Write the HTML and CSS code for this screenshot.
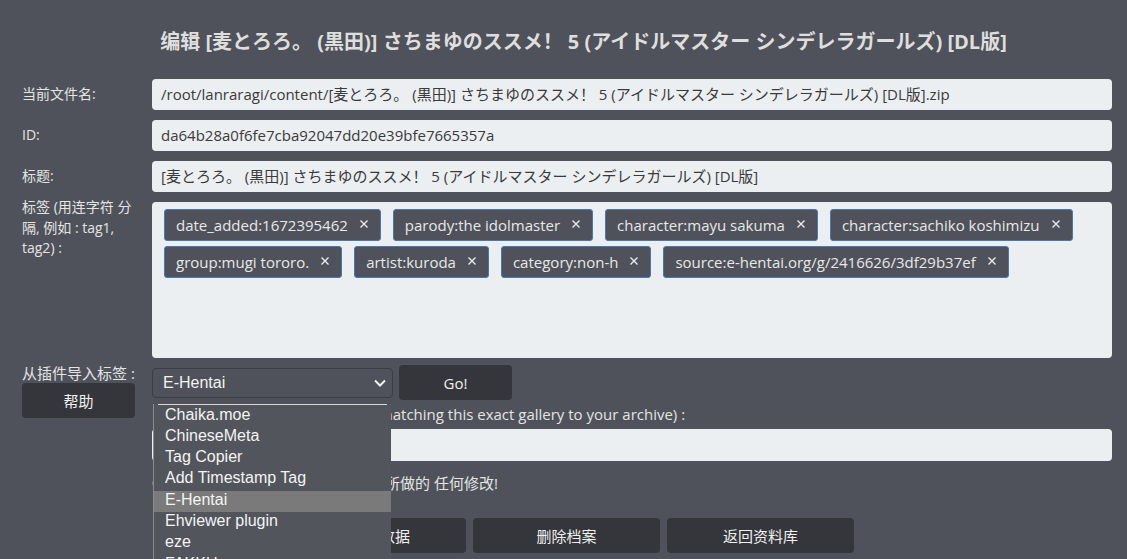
FILE: index.html
```html
<!DOCTYPE html>
<html lang="zh-CN">
<head>
<meta charset="utf-8">
<title>编辑档案</title>
<link rel="stylesheet" href="styles.css">
</head>
<body>
<main class="page">
  <h1 class="title">编辑 [麦とろろ。 (黒田)] さちまゆのススメ！ 5 (アイドルマスター シンデレラガールズ) [DL版]</h1>

  <div class="form">
    <div class="label label-mid">当前文件名:</div>
    <div class="field">/root/lanraragi/content/[麦とろろ。 (黒田)] さちまゆのススメ！ 5 (アイドルマスター シンデレラガールズ) [DL版].zip</div>

    <div class="label label-mid">ID:</div>
    <div class="field">da64b28a0f6fe7cba92047dd20e39bfe7665357a</div>

    <div class="label label-mid">标题:</div>
    <div class="field">[麦とろろ。 (黒田)] さちまゆのススメ！ 5 (アイドルマスター シンデレラガールズ) [DL版]</div>

    <div class="label label-tags">标签 (用连字符 分隔, 例如 : tag1, tag2) :</div>
    <div class="tagbox">
      <span class="tag">date_added:1672395462<svg class="tag-x" viewBox="0 0 10 10"><path d="M1.5 1.5 L8.5 8.5 M8.5 1.5 L1.5 8.5"/></svg></span>
      <span class="tag">parody:the idolmaster<svg class="tag-x" viewBox="0 0 10 10"><path d="M1.5 1.5 L8.5 8.5 M8.5 1.5 L1.5 8.5"/></svg></span>
      <span class="tag">character:mayu sakuma<svg class="tag-x" viewBox="0 0 10 10"><path d="M1.5 1.5 L8.5 8.5 M8.5 1.5 L1.5 8.5"/></svg></span>
      <span class="tag">character:sachiko koshimizu<svg class="tag-x" viewBox="0 0 10 10"><path d="M1.5 1.5 L8.5 8.5 M8.5 1.5 L1.5 8.5"/></svg></span>
      <span class="tag">group:mugi tororo.<svg class="tag-x" viewBox="0 0 10 10"><path d="M1.5 1.5 L8.5 8.5 M8.5 1.5 L1.5 8.5"/></svg></span>
      <span class="tag">artist:kuroda<svg class="tag-x" viewBox="0 0 10 10"><path d="M1.5 1.5 L8.5 8.5 M8.5 1.5 L1.5 8.5"/></svg></span>
      <span class="tag">category:non-h<svg class="tag-x" viewBox="0 0 10 10"><path d="M1.5 1.5 L8.5 8.5 M8.5 1.5 L1.5 8.5"/></svg></span>
      <span class="tag">source:e-hentai.org/g/2416626/3df29b37ef<svg class="tag-x" viewBox="0 0 10 10"><path d="M1.5 1.5 L8.5 8.5 M8.5 1.5 L1.5 8.5"/></svg></span>
    </div>

    <div class="plugin-left">
      <div class="label label-plugin">从插件导入标签 :</div>
      <button class="btn btn-help">帮助</button>
    </div>
    <div class="plugin-right">
      <div class="plugin-row">
        <div class="select-wrap">
          <div class="select">
            <span>E-Hentai</span>
            <svg class="chevron" viewBox="0 0 12 8"><path d="M1 1.5 L6 6.5 L11 1.5"/></svg>
          </div>
          <ul class="dropdown">
            <li class="option">Chaika.moe</li>
            <li class="option">ChineseMeta</li>
            <li class="option">Tag Copier</li>
            <li class="option">Add Timestamp Tag</li>
            <li class="option option-active">E-Hentai</li>
            <li class="option">Ehviewer plugin</li>
            <li class="option">eze</li>
            <li class="option">FAKKU</li>
          </ul>
        </div>
        <button class="btn btn-go">Go!</button>
      </div>
      <div class="arg-label">E-H Gallery URL (Will attach tags matching this exact gallery to your archive) :</div>
      <div class="field field-arg"></div>
      <div class="warning">
        <svg class="warn-icon" viewBox="0 0 16 16"><circle cx="8" cy="8" r="7.5"/><path d="M8 3.5 V9.5 M8 11.2 V12.6"/></svg>
        <span>使用插件将会覆盖您在此页面上所做的 任何修改!</span>
      </div>
    </div>
  </div>

  <div class="actions">
    <button class="btn btn-action">保存元数据</button>
    <button class="btn btn-action">删除档案</button>
    <button class="btn btn-action">返回资料库</button>
  </div>
</main>
</body>
</html>
```

FILE: styles.css
```css
html, body {
  margin: 0;
  padding: 0;
  overflow: hidden;
}

body {
  background: #4f525b;
  font-family: "Open Sans", "Noto Sans CJK SC", sans-serif;
  color: #e6e6e6;
}

.page {
  width: 1127px;
  height: 559px;
  position: relative;
  overflow: hidden;
}

.title {
  margin: 0;
  padding: 28px 0 0 40px;
  line-height: 28px;
  font-size: 20px;
  font-weight: 700;
  text-align: center;
  color: #dedede;
}

.form {
  display: grid;
  grid-template-columns: 118px 1fr;
  column-gap: 12px;
  row-gap: 10px;
  padding: 0 15px 0 22px;
  margin-top: 23px;
}

.label {
  font-size: 14px;
  line-height: 20px;
  color: #e4e4e4;
}

.label-mid {
  align-self: center;
  margin-top: -2px;
}

.label-tags {
  margin-top: -5px;
  line-height: 20.5px;
}

.field {
  height: 31px;
  box-sizing: border-box;
  padding: 0 9px;
  line-height: 31px;
  font-size: 15px;
  background: #eceff1;
  color: #3a3a3a;
  border-radius: 4px;
  white-space: nowrap;
  overflow: hidden;
}

.tagbox {
  height: 156px;
  box-sizing: border-box;
  padding: 7px 12px;
  background: #eceff1;
  border-radius: 4px;
  display: flex;
  flex-wrap: wrap;
  align-content: flex-start;
}

.tag {
  display: inline-flex;
  align-items: center;
  height: 32px;
  box-sizing: border-box;
  padding: 0 11px;
  margin: 0 12px 5px 0;
  gap: 11px;
  background: #4f525b;
  border: 1px solid #4878b8;
  border-radius: 3px;
  font-size: 15px;
  color: #e8e8e8;
  white-space: nowrap;
}

.tag-x {
  width: 10px;
  height: 10px;
  margin-top: -2px;
  fill: none;
  stroke: #ececec;
  stroke-width: 1.4;
}

.plugin-left,
.plugin-right {
  margin-top: -3px;
}

.label-plugin {
  margin-top: -1px;
  font-size: 15px;
  line-height: 18px;
}

.btn {
  border: none;
  background: #35363b;
  color: #f0f0f0;
  font-family: "Open Sans", "Noto Sans CJK SC", sans-serif;
  font-size: 15px;
  border-radius: 4px;
  padding: 0;
  cursor: pointer;
}

.btn-help {
  display: block;
  margin-top: 1px;
  width: 113px;
  height: 35px;
}

.plugin-row {
  display: flex;
  align-items: center;
  height: 35px;
}

.select-wrap {
  position: relative;
  width: 241px;
  height: 30px;
}

.select {
  height: 30px;
  box-sizing: border-box;
  border: 1px solid #3a3d44;
  border-radius: 4px;
  background: #4f525b;
  display: flex;
  align-items: center;
  justify-content: space-between;
  padding: 0 6px 0 10px;
  font-family: "Liberation Sans", Arial, sans-serif;
  font-size: 16px;
  color: #f2f2f2;
}

.chevron {
  width: 12px;
  height: 8px;
  fill: none;
  stroke: #f0f0f0;
  stroke-width: 2;
}

.dropdown {
  position: absolute;
  z-index: 10;
  left: 1px;
  top: 36px;
  width: 238px;
  height: 170px;
  margin: 0;
  padding: 2px 0 0;
  box-sizing: border-box;
  list-style: none;
  background: #52555c;
  border-left: 1px solid #8a8c90;
  font-family: "Liberation Sans", Arial, sans-serif;
  font-size: 16px;
  color: #f4f4f4;
}

.dropdown::before {
  content: "";
  position: absolute;
  left: 4px;
  right: 4px;
  top: 0;
  height: 1px;
  background: #d6d6d6;
}

.option {
  height: 21.33px;
  line-height: 18.5px;
  padding-left: 11px;
  white-space: nowrap;
}

.option-active {
  background: #7a7a7a;
}

.btn-go {
  margin-left: 6px;
  width: 113px;
  height: 35px;
}

.arg-label {
  margin-top: 4px;
  font-size: 15px;
  line-height: 20px;
  color: #e4e4e4;
  white-space: nowrap;
}

.field-arg {
  margin-top: 5px;
  height: 32px;
}

.warning {
  margin-top: 12px;
  display: flex;
  align-items: center;
  gap: 7px;
  font-size: 15px;
  line-height: 20px;
  color: #e4e4e4;
}

.warn-icon {
  width: 16px;
  height: 16px;
  flex: none;
  fill: #bfc1c5;
  stroke: none;
}

.warn-icon path {
  stroke: #4f525b;
  stroke-width: 2;
}

.actions {
  display: flex;
  justify-content: center;
  gap: 7px;
  margin-top: 25px;
  padding-left: 6px;
}

.btn-action {
  width: 187px;
  height: 35px;
}
```
